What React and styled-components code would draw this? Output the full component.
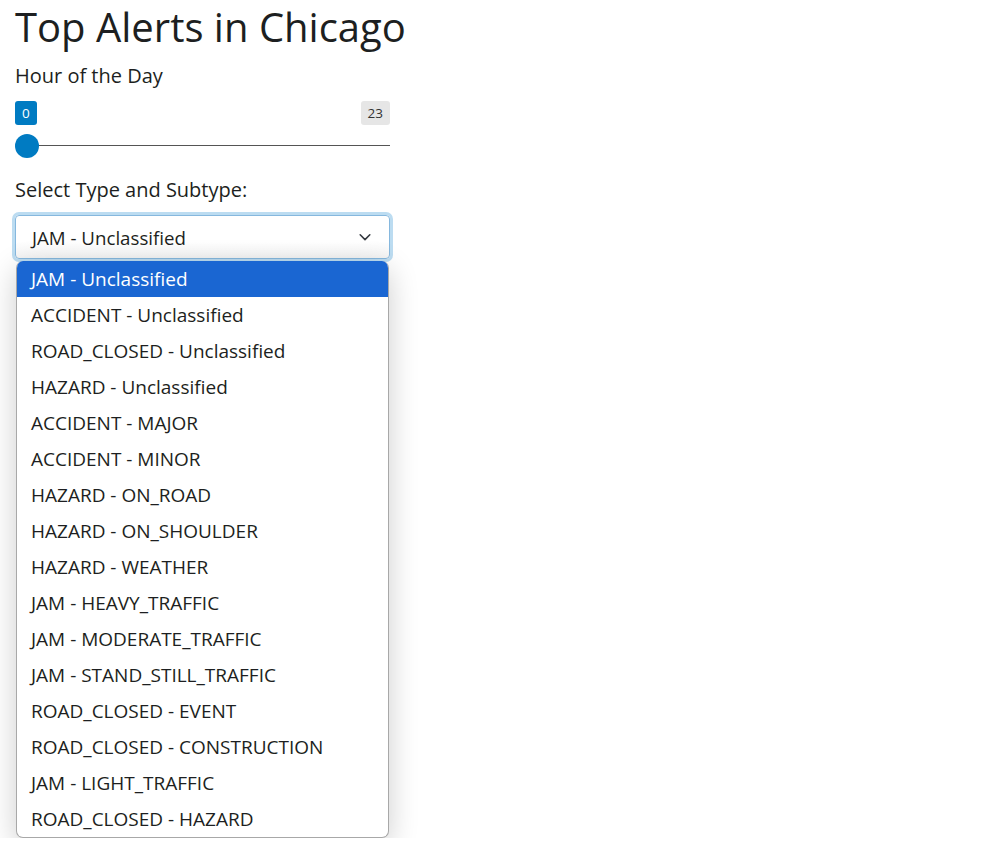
import React, { useState } from "react";
import styled, { createGlobalStyle } from "styled-components";

const GlobalStyle = createGlobalStyle`
  body {
    margin: 0;
    background: #fff;
    font-family: "Open Sans", "Noto Sans", sans-serif;
    color: #1d1f21;
  }
`;

const Page = styled.div`
  padding: 0 15px;
`;

const Title = styled.h2`
  font-size: 40px;
  font-weight: 400;
  line-height: 54px;
  margin: 0 0 10px;
  white-space: nowrap;
`;

const Controls = styled.div`
  width: 375px;
  display: flex;
  flex-direction: column;
`;

const Label = styled.label`
  font-size: 20px;
  line-height: 24px;
  margin-bottom: ${(p) => p.gap || 12}px;
`;

const Slider = styled.div`
  display: flex;
  flex-direction: column;
  gap: 9px;
  padding-top: 1px;
  margin-bottom: 20px;
`;

const BadgeRow = styled.div`
  display: flex;
  justify-content: space-between;
  align-items: flex-start;
`;

const Badge = styled.span`
  padding: 3px 7px;
  border-radius: 3px;
  font-size: 13.5px;
  line-height: 18px;
  background: ${(p) => (p.active ? "#007bc2" : "#e6e6e6")};
  color: ${(p) => (p.active ? "#fff" : "#333")};
`;

const Track = styled.div`
  display: flex;
  align-items: center;
  height: 24px;
  background: linear-gradient(#555, #555) no-repeat 12px 11px / calc(100% - 12px) 1px;
`;

const Thumb = styled.div`
  width: 24px;
  height: 24px;
  border-radius: 50%;
  background: #007bc2;
`;

const SelectBox = styled.div`
  display: flex;
  align-items: center;
  justify-content: space-between;
  height: 44px;
  box-sizing: border-box;
  padding: 0 17px 0 16px;
  border: 1px solid #86b8de;
  border-radius: 4px;
  box-shadow: 0 0 0 3px #bcdcf1;
  font-size: 18.7px;
  background: linear-gradient(#fff 60%, #f4f4f4);
`;

const Menu = styled.ul`
  margin: 2px 1px 0;
  padding: 0;
  list-style: none;
  background: #fff;
  border: 1px solid #a8a8a8;
  border-top: none;
  border-radius: 7px;
  overflow: hidden;
  box-shadow: 0 8px 30px rgba(0, 0, 0, 0.2);
`;

const Option = styled.li`
  height: 36px;
  line-height: 36px;
  padding-left: 14px;
  font-size: 19px;
  background: ${(p) => (p.$selected ? "#1a66d2" : "transparent")};
  color: ${(p) => (p.$selected ? "#fff" : "#1d1f21")};
`;

const options = [
  "JAM - Unclassified",
  "ACCIDENT - Unclassified",
  "ROAD_CLOSED - Unclassified",
  "HAZARD - Unclassified",
  "ACCIDENT - MAJOR",
  "ACCIDENT - MINOR",
  "HAZARD - ON_ROAD",
  "HAZARD - ON_SHOULDER",
  "HAZARD - WEATHER",
  "JAM - HEAVY_TRAFFIC",
  "JAM - MODERATE_TRAFFIC",
  "JAM - STAND_STILL_TRAFFIC",
  "ROAD_CLOSED - EVENT",
  "ROAD_CLOSED - CONSTRUCTION",
  "JAM - LIGHT_TRAFFIC",
  "ROAD_CLOSED - HAZARD",
];

const App = () => {
  const [value] = useState(options[0]);
  return (
    <Page>
      <GlobalStyle />
      <Title>Top Alerts in Chicago</Title>
      <Controls>
        <Label>Hour of the Day</Label>
        <Slider>
          <BadgeRow>
            <Badge active>0</Badge>
            <Badge>23</Badge>
          </BadgeRow>
          <Track>
            <Thumb />
          </Track>
        </Slider>
        <Label gap={13}>Select Type and Subtype:</Label>
        <SelectBox>
          <span>{value}</span>
          <svg width="14" height="14" viewBox="0 0 16 16" fill="none">
            <path d="M2.5 5.5l5.5 5.5 5.5-5.5" stroke="#343a40" strokeWidth="1.8" strokeLinecap="round" strokeLinejoin="round" />
          </svg>
        </SelectBox>
        <Menu>
          {options.map((o) => (
            <Option key={o} $selected={o === value}>
              {o}
            </Option>
          ))}
        </Menu>
      </Controls>
    </Page>
  );
};

export default App;
